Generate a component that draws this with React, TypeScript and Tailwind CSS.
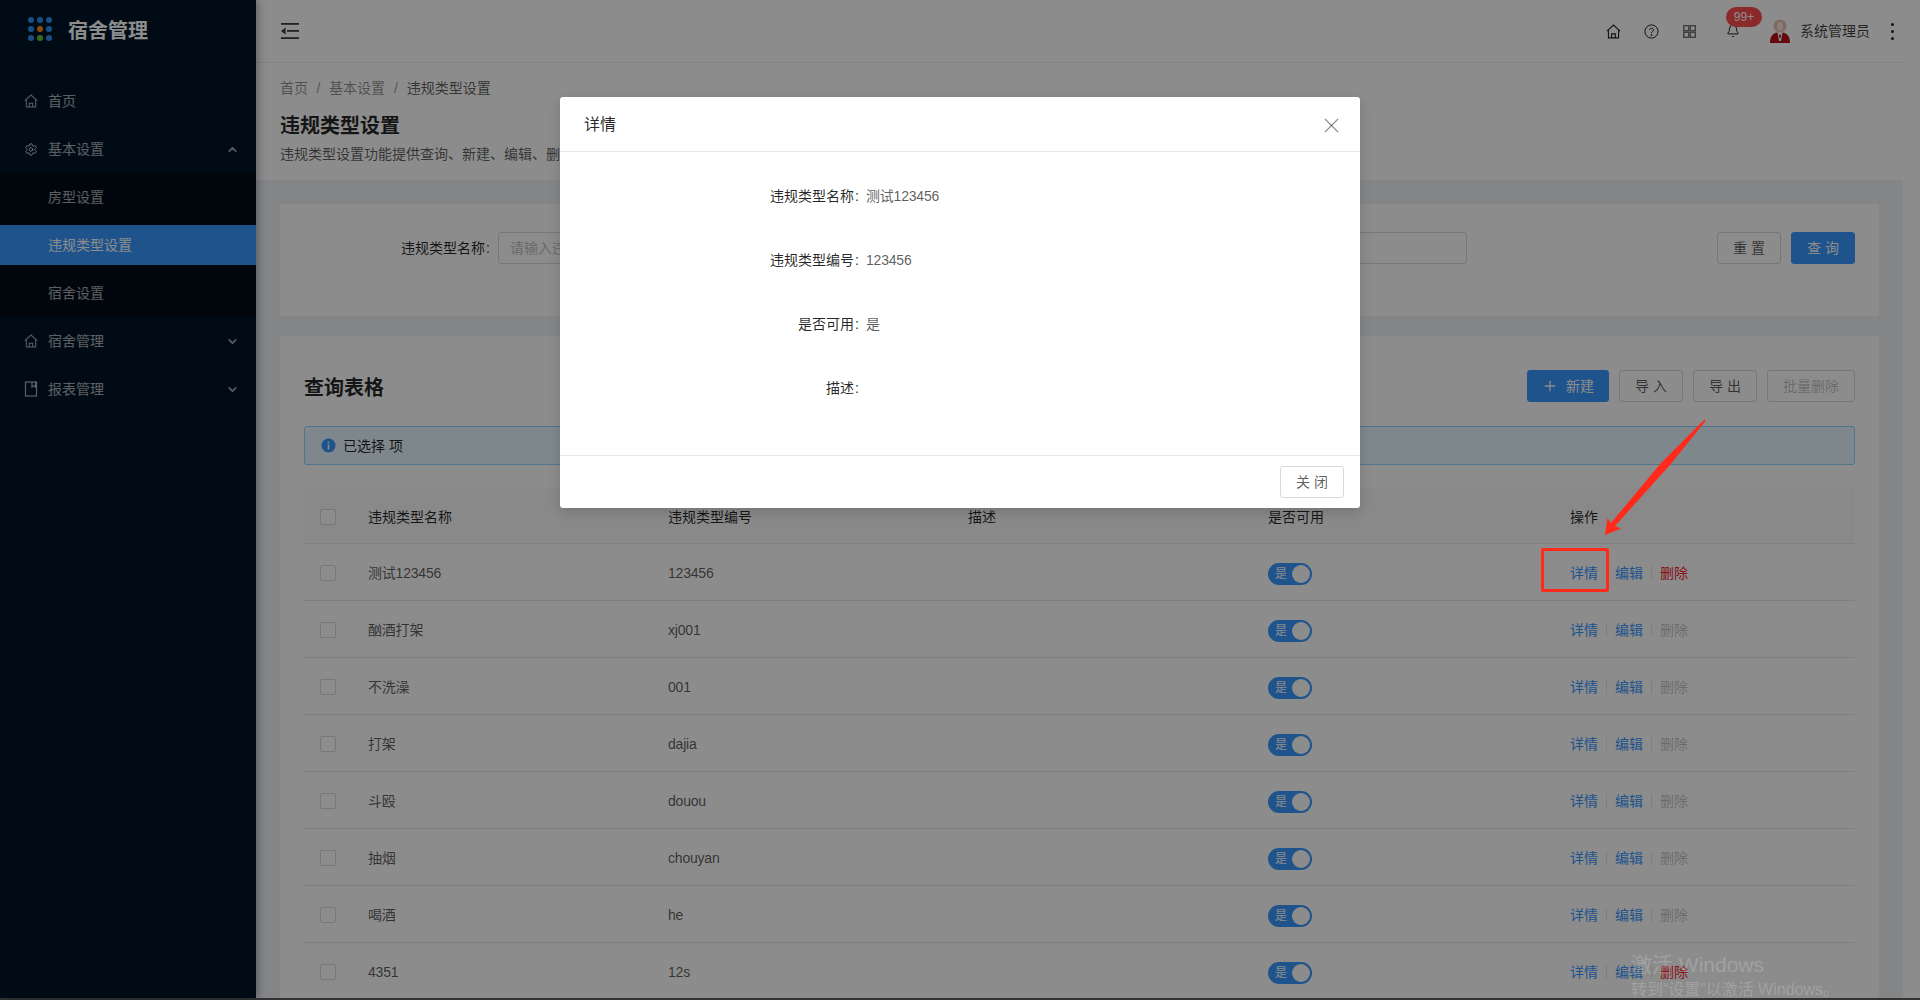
import { Bell, ChevronDown, ChevronUp, Plus, Settings, X } from "lucide-react";

const PRIMARY_TEXT = "text-[#3898ff]";

function HomeIcon({ size = 16, sw = 1 }: { size?: number; sw?: number }) {
  return (
    <svg width={size} height={size} viewBox="0 0 16 16" fill="none" stroke="currentColor" strokeWidth={sw}>
      <path d="M1 7.6 8 1.2l7 6.4M2.6 6.6v8.2h10.8V6.6" />
      <path d="M6 14.8v-4.3h4v4.3" />
    </svg>
  );
}

function BookIcon() {
  return (
    <svg width="14" height="16" viewBox="0 0 14 16" fill="none" stroke="currentColor" strokeWidth="1.2">
      <rect x="1.5" y="1" width="11" height="14" />
      <path d="M8 1v5l1.8-1.2L11.5 6V1" />
    </svg>
  );
}

function Logo() {
  const colors = ["#3190f0", "#3190f0", "#3190f0", "#3190f0", "#ff8a10", "#3190f0", "#3190f0", "#5cc83a", "#3190f0"];
  return (
    <div className="grid grid-cols-[6px_6px_6px] gap-[3px]">
      {colors.map((c, i) => (
        <span key={i} className="h-[6px] w-[6px] rounded-full" style={{ background: c }} />
      ))}
    </div>
  );
}

function MenuItem({ icon, label, chevron }: { icon: React.ReactNode; label: string; chevron?: "up" | "down" }) {
  return (
    <div className="flex h-[48px] items-center pl-[24px] pr-[17px] text-white/65">
      <span className="flex w-[14px] shrink-0 justify-center">{icon}</span>
      <span className="ml-[10px] flex-1 text-sm">{label}</span>
      {chevron === "up" && <ChevronUp size={13} strokeWidth={3} />}
      {chevron === "down" && <ChevronDown size={13} strokeWidth={3} />}
    </div>
  );
}

function Sidebar() {
  return (
    <aside className="relative z-10 flex w-[256px] shrink-0 flex-col bg-[#001529] shadow-[2px_0_8px_rgba(0,21,41,0.35)]">
      <div className="flex h-[77px] items-start pl-[28px] pt-[17px]">
        <Logo />
        <span className="ml-[16px] text-[20px] leading-[28px] font-bold text-white">宿舍管理</span>
      </div>
      <MenuItem icon={<HomeIcon sw={1.2} />} label="首页" />
      <MenuItem icon={<Settings size={17} strokeWidth={1.4} className="text-white/90" />} label="基本设置" chevron="up" />
      <div className="flex flex-col gap-[8px] bg-[#000c17] py-[4px] text-sm text-white/65">
        <div className="flex h-[40px] items-center pl-[48px]">房型设置</div>
        <div className="flex h-[40px] items-center bg-[#3898ff] pl-[48px] text-white">违规类型设置</div>
        <div className="flex h-[40px] items-center pl-[48px]">宿舍设置</div>
      </div>
      <MenuItem icon={<HomeIcon sw={1.2} />} label="宿舍管理" chevron="down" />
      <MenuItem icon={<BookIcon />} label="报表管理" chevron="down" />
    </aside>
  );
}

function Avatar() {
  return (
    <svg width="20" height="24" viewBox="0 0 20 24">
      <circle cx="10" cy="7" r="6.5" fill="#e8bdb0" />
      <ellipse cx="10" cy="7.5" rx="3" ry="4.5" fill="#f6e4dc" />
      <path d="M0 24c0-7 3-9.5 7-10.5l3 2.5 3-2.5c4 1 7 3.5 7 10.5z" fill="#b8121a" />
      <path d="M7.5 13.5 10 16l2.5-2.5L11 22H9z" fill="#fff" />
      <path d="M9 16h2l-.5 3h-1z" fill="#7a0a10" />
    </svg>
  );
}

function Topbar() {
  return (
    <header className="flex h-[62px] shrink-0 items-center bg-white pl-[25px] pr-[9px] text-black/75">
      <svg width="18" height="16" viewBox="0 0 18 16" fill="currentColor">
        <rect x="0" y="0" width="18" height="1.8" />
        <rect x="6" y="7" width="12" height="1.8" />
        <rect x="0" y="14.2" width="18" height="1.8" />
        <path d="M4.6 4.4v7.2L0 8z" />
      </svg>
      <div className="flex-1" />
      <span className="text-black/85"><HomeIcon size={15} sw={1.2} /></span>
      <svg className="ml-[23px] text-black/85" width="15" height="15" viewBox="0 0 15 15" fill="none" stroke="currentColor">
        <circle cx="7.5" cy="7.5" r="6.6" />
        <path d="M5.6 6c0-2.4 3.9-2.4 3.9 0 0 1.4-2 1.4-2 3" />
        <circle cx="7.5" cy="11" r=".5" fill="currentColor" />
      </svg>
      <svg className="ml-[24px] text-black/55" width="13" height="13" viewBox="0 0 13 13" fill="none" stroke="currentColor" strokeWidth="1.4">
        <rect x=".7" y=".7" width="5" height="5" />
        <rect x="7.3" y=".7" width="5" height="5" />
        <rect x=".7" y="7.3" width="5" height="5" />
        <rect x="7.3" y="7.3" width="5" height="5" />
      </svg>
      <span className="relative ml-[30px] flex w-[14px] justify-center text-black">
        <Bell size={16} strokeWidth={1.5} />
        <span className="absolute left-[0px] top-[-16px] flex h-[20px] w-[36px] items-center justify-center rounded-full bg-[#ff4d4f] text-xs text-white">99+</span>
      </span>
      <span className="ml-[30px] flex"><Avatar /></span>
      <span className="ml-[10px] text-sm text-black/75">系统管理员</span>
      <span className="ml-[20px] flex w-[4px] flex-col items-center gap-[4px]">
        <i className="h-[3px] w-[3px] rounded-full bg-black/85" />
        <i className="h-[3px] w-[3px] rounded-full bg-black/85" />
        <i className="h-[3px] w-[3px] rounded-full bg-black/85" />
      </span>
    </header>
  );
}

function Btn({ children, primary, disabled, w }: { children: React.ReactNode; primary?: boolean; disabled?: boolean; w: string }) {
  const tone = primary
    ? "bg-[#3898ff] border-[#3898ff] text-white"
    : disabled
      ? "border-[#d9d9d9] text-black/25"
      : "border-[#d9d9d9] text-black/65";
  return (
    <span className={`flex h-[32px] items-center justify-center rounded-[3px] border text-sm ${tone} ${w}`}>{children}</span>
  );
}

const rows = [
  ["测试123456", "123456", true],
  ["酗酒打架", "xj001", false],
  ["不洗澡", "001", false],
  ["打架", "dajia", false],
  ["斗殴", "douou", false],
  ["抽烟", "chouyan", false],
  ["喝酒", "he", false],
  ["4351", "12s", true],
] as const;

const gridCols = "grid grid-cols-[64px_300px_300px_300px_302px_1fr] items-center";

function Checkbox() {
  return <span className="ml-[16px] block h-[16px] w-[16px] rounded-[2px] border border-[#d9d9d9] bg-white" />;
}

function Table() {
  return (
    <div className="mt-[23px] text-sm">
      <div className={`${gridCols} h-[56px] border-b border-[#e8e8e8] bg-[#fafafa] pt-[3px] text-black/85`}>
        <Checkbox />
        <span>违规类型名称</span>
        <span>违规类型编号</span>
        <span>描述</span>
        <span>是否可用</span>
        <span>操作</span>
      </div>
      {rows.map(([name, code, del]) => (
        <div key={name} className={`${gridCols} h-[57px] border-b border-[#e8e8e8] pt-[1px] text-black/65`}>
          <Checkbox />
          <span className="tracking-[-0.2px]">{name}</span>
          <span className="tracking-[-0.2px]">{code}</span>
          <span />
          <span className="mt-[3px] flex h-[22px] w-[44px] items-center justify-between rounded-full bg-[#3898ff] pl-[7px] pr-[2px] text-xs text-white">
            是
            <i className="h-[18px] w-[18px] rounded-full bg-white" />
          </span>
          <span className="flex items-center">
            <a className={PRIMARY_TEXT}>详情</a>
            <i className="mx-[8px] h-[14px] w-px bg-[#e8e8e8]" />
            <a className={PRIMARY_TEXT}>编辑</a>
            <i className="mx-[8px] h-[14px] w-px bg-[#e8e8e8]" />
            <a className={del ? "text-[#f5222d]" : "text-black/25"}>删除</a>
          </span>
        </div>
      ))}
    </div>
  );
}

function Spaced({ children }: { children: string }) {
  return <span className="pl-[4px] tracking-[4px]">{children}</span>;
}

function Main() {
  return (
    <div className="flex min-w-0 flex-1 flex-col overflow-hidden bg-[#f0f2f5]">
      <Topbar />
      <section className="h-[118px] shrink-0 border-t border-[#f0f0f0] bg-white px-[24px] pt-[14px]">
        <div className="flex h-[22px] items-center text-sm text-black/45">
          <span>首页</span>
          <span className="mx-[8.5px]">/</span>
          <span>基本设置</span>
          <span className="mx-[9px]">/</span>
          <span className="text-black/65">违规类型设置</span>
        </div>
        <h1 className="mt-[13px] text-[20px] leading-[28px] font-bold text-black/85">违规类型设置</h1>
        <p className="mt-[3px] text-sm leading-[22px] text-black/65">违规类型设置功能提供查询、新建、编辑、删除等操作。</p>
      </section>
      <section className="mx-[24px] mt-[24px] flex h-[112px] shrink-0 items-start bg-white pr-[24px] pt-[28px]">
        <label className="flex h-[32px] w-[210px] items-center justify-end text-sm text-black/85">
          违规类型名称<span className="ml-[1px]">:</span>
        </label>
        <input
          className="ml-[8px] h-[32px] w-[969px] rounded-[3px] border border-[#d9d9d9] px-[11px] text-sm placeholder:text-[#bfbfbf]"
          placeholder="请输入违规类型名称"
          readOnly
        />
        <div className="ml-auto flex gap-[10px]">
          <Btn w="w-[64px]"><Spaced>重置</Spaced></Btn>
          <Btn primary w="w-[64px]"><Spaced>查询</Spaced></Btn>
        </div>
      </section>
      <section className="mx-[24px] mt-[20px] flex-1 bg-white px-[24px] pt-[34px]">
        <div className="flex items-center justify-between">
          <h2 className="pt-[4px] text-[20px] leading-[28px] font-bold text-black/85">查询表格</h2>
          <div className="flex gap-[10px]">
            <Btn primary w="w-[82px]"><Plus size={16} strokeWidth={2} className="mr-[8px]" />新建</Btn>
            <Btn w="w-[64px]"><Spaced>导入</Spaced></Btn>
            <Btn w="w-[64px]"><Spaced>导出</Spaced></Btn>
            <Btn disabled w="w-[88px]">批量删除</Btn>
          </div>
        </div>
        <div className="mt-[24px] flex h-[39px] items-center rounded-[3px] border border-[#91d5ff] bg-[#e6f7ff] pl-[16px] text-sm text-black/85">
          <svg width="15" height="15" viewBox="0 0 15 15">
            <circle cx="7.5" cy="7.5" r="7" fill="#3898ff" />
            <rect x="6.7" y="6.4" width="1.6" height="5" fill="#fff" />
            <rect x="6.7" y="3.6" width="1.6" height="1.6" fill="#fff" />
          </svg>
          <span className="ml-[7px]">已选择 项</span>
        </div>
        <Table />
      </section>
    </div>
  );
}

function Modal() {
  const items = [
    ["违规类型名称", "测试123456"],
    ["违规类型编号", "123456"],
    ["是否可用", "是"],
    ["描述", ""],
  ];
  return (
    <div className="absolute left-[560px] top-[97px] z-30 flex h-[411px] w-[800px] flex-col rounded-[3px] bg-white shadow-[0_4px_12px_rgba(0,0,0,0.15)]">
      <div className="flex h-[55px] shrink-0 items-center justify-between border-b border-[#e8e8e8] pl-[24px] pr-[16px]">
        <span className="pt-[2px] text-base text-black/85">详情</span>
        <X size={25} strokeWidth={1.1} className="mt-[2px] text-black/45" />
      </div>
      <div className="flex flex-1 flex-col gap-[42px] pt-[33px] text-sm">
        {items.map(([k, v]) => (
          <div key={k} className="flex h-[22px] items-center">
            <span className="w-[299px] text-right text-black/85">
              {k}
              <span className="ml-[1px]">:</span>
            </span>
            <span className="ml-[7px] tracking-[-0.2px] text-black/65">{v}</span>
          </div>
        ))}
      </div>
      <div className="flex h-[53px] shrink-0 items-center justify-end border-t border-[#e8e8e8] pr-[16px]">
        <Btn w="w-[64px]"><Spaced>关闭</Spaced></Btn>
      </div>
    </div>
  );
}

function Annotations() {
  return (
    <>
      <div className="absolute left-[1541px] top-[548px] z-10 h-[44px] w-[68px] rounded-[2px] border-[3px] border-[#ff2a1a]" />
      <svg className="absolute left-[1600px] top-[415px] z-10" width="110" height="125" viewBox="1600 415 110 125">
        <path d="M1704.5 419.5 1705.5 421 1670 465 1615 526 1621 528.5 1605 535 1607.5 518 1611 523 1661 463Z" fill="#ff2a1a" />
      </svg>
    </>
  );
}

export default function App() {
  return (
    <div className="flex h-screen w-full flex-col overflow-hidden font-['Liberation_Sans','Noto_Sans_CJK_SC',sans-serif]">
      <div className="relative flex min-h-0 flex-1">
        <Sidebar />
        <Main />
        <div className="w-[17px] shrink-0 bg-white" />
        <div className="absolute inset-0 z-20 bg-black/45" />
        <Modal />
        <div className="absolute inset-0 z-20 overflow-hidden pointer-events-none">
          <Annotations />
        </div>
        <div className="absolute left-[1631px] top-[952px] z-30 text-white/20">
          <p className="text-[21px] leading-[26px]">激活 Windows</p>
          <p className="mt-[2px] text-base leading-[20px]">转到“设置”以激活 Windows。</p>
        </div>
      </div>
      <div className="h-[2px] shrink-0 bg-[#333]" />
    </div>
  );
}
